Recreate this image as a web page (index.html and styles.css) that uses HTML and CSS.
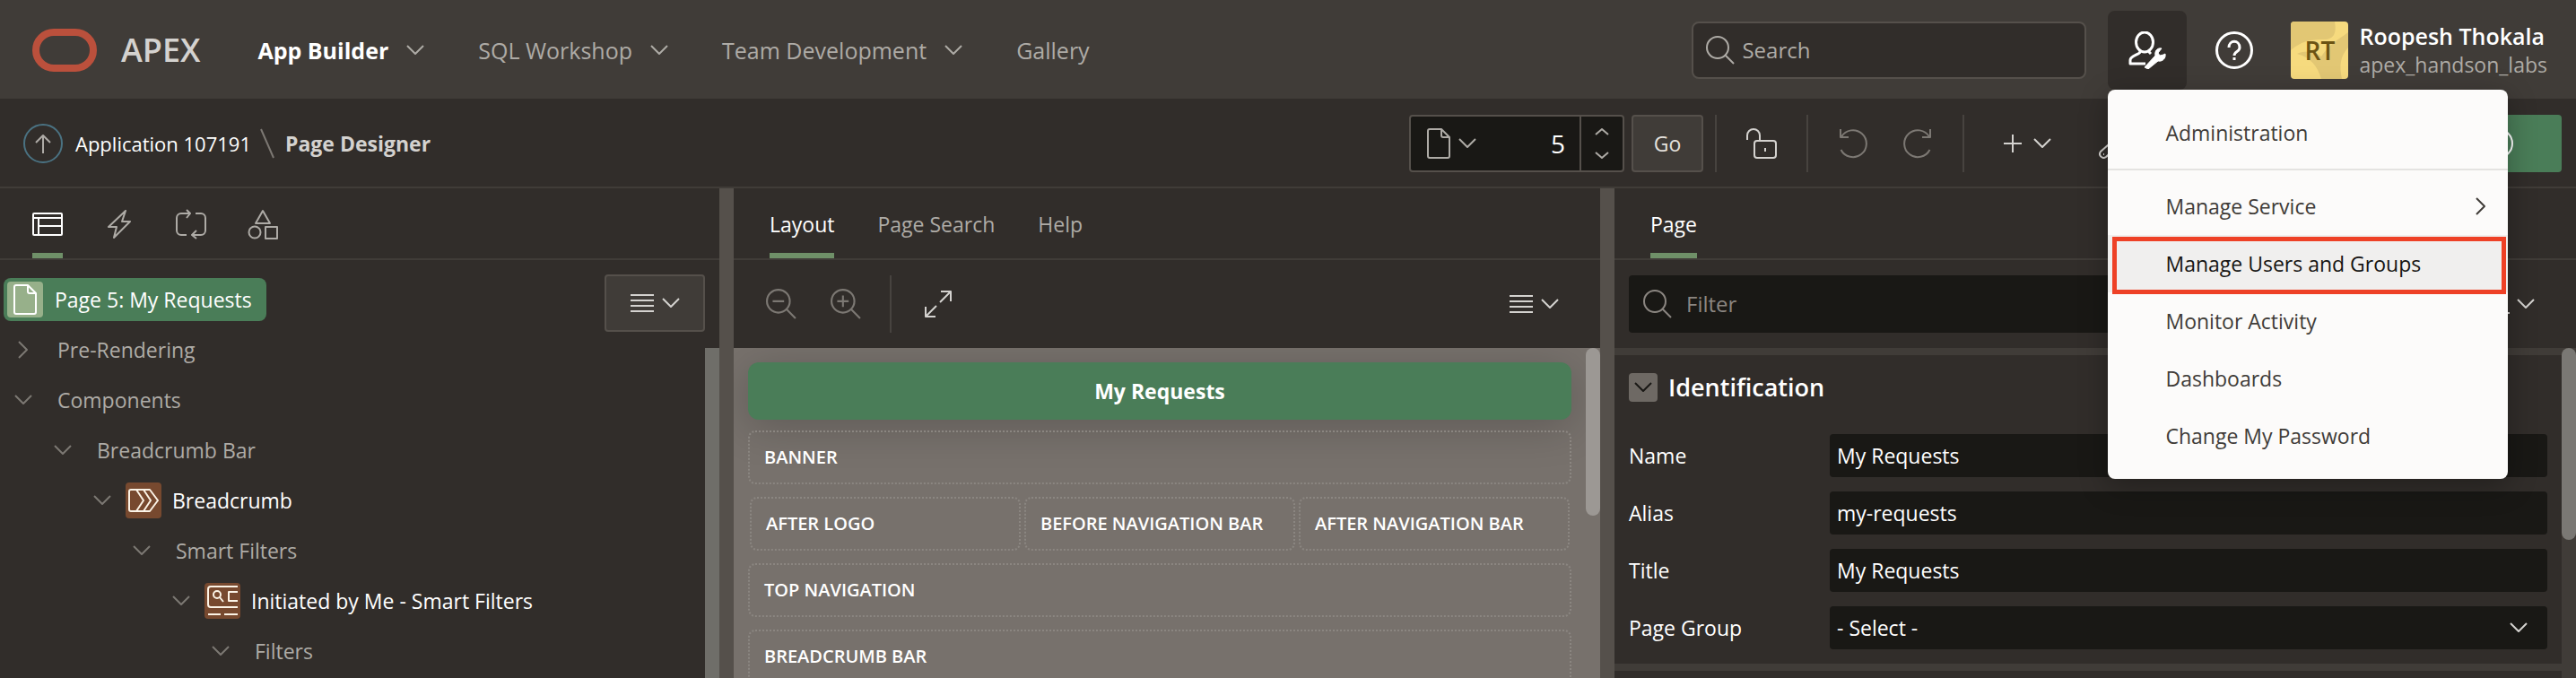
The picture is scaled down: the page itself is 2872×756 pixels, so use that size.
FILE: index.html
```html
<!DOCTYPE html>
<html lang="en">
<head>
<meta charset="utf-8">
<title>Page Designer</title>
<link rel="stylesheet" href="styles.css">
</head>
<body>
<svg class="sprite" aria-hidden="true">
  <symbol id="i-down" viewBox="0 0 20 12"><path d="M1 1l9 9 9-9"/></symbol>
  <symbol id="i-right" viewBox="0 0 12 20"><path d="M1 1l9 9-9 9"/></symbol>
  <symbol id="i-search" viewBox="0 0 32 32"><circle cx="13" cy="13" r="12"/><path d="M21.500 21.500L31 31"/></symbol>
  <symbol id="i-zoomout" viewBox="0 0 32 32"><circle cx="13" cy="13" r="12"/><path d="M21.500 21.500L31 31M7 13h12"/></symbol>
  <symbol id="i-zoomin" viewBox="0 0 32 32"><circle cx="13" cy="13" r="12"/><path d="M21.500 21.500L31 31M7 13h12M13 7v12"/></symbol>
  <symbol id="i-file" viewBox="0 0 26 34"><path d="M3 1h13l9 9v21a2 2 0 0 1-2 2H3a2 2 0 0 1-2-2V3a2 2 0 0 1 2-2zM16 1v7a2 2 0 0 0 2 2h7"/></symbol>
  <symbol id="i-lines" viewBox="0 0 26 22"><path d="M0 2h26M0 8h26M0 14h26M0 20h26"/></symbol>
  <symbol id="i-expand" viewBox="0 0 30 30"><path d="M18 1h11v11M29 1L17 13M12 29H1V18M1 29l12-12"/></symbol>
  <symbol id="i-undo" viewBox="0 0 32 34"><path d="M1 1v9h9M2 9.500A15 15 0 1 1 1.500 24"/></symbol>
  <symbol id="i-redo" viewBox="0 0 32 34"><path d="M31 1v9h-9M30 9.500A15 15 0 1 0 30.500 24"/></symbol>
</svg>
<div class="app">
  <header class="header">
    <svg class="logo" viewBox="0 0 72 48" aria-label="Oracle"><rect x="4" y="4" width="64" height="40" rx="20"/></svg>
    <span class="brand">APEX</span>
    <nav class="nav">
      <a class="nav-item active" href="#">App Builder <svg class="ic chev"><use href="#i-down"/></svg></a>
      <a class="nav-item" href="#">SQL Workshop <svg class="ic chev"><use href="#i-down"/></svg></a>
      <a class="nav-item" href="#">Team Development <svg class="ic chev"><use href="#i-down"/></svg></a>
      <a class="nav-item" href="#">Gallery</a>
    </nav>
    <label class="search"><svg class="ic i32"><use href="#i-search"/></svg><input type="search" placeholder="Search" aria-label="Search"></label>
    <div class="admin">
      <button class="admin-btn" aria-label="Administration menu">
        <svg class="ic i42" viewBox="0 0 42 42"><ellipse cx="18" cy="12" rx="9.500" ry="11"/><path d="M13 21v2c-1 3-11 4-11 9v4h17M23 21v2l2 2"/><path class="solid" d="M18 40l12-13c-1-5 2-9 7-8l-4 5 2 3 4-1 2-1c1 5-3 9-8 8L22 42z"/></svg>
      </button>
      <div class="menu" role="menu">
        <button role="menuitem">Administration</button>
        <hr>
        <button role="menuitem">Manage Service <svg class="ic chev-r"><use href="#i-right"/></svg></button>
        <button role="menuitem" class="current">Manage Users and Groups</button>
        <button role="menuitem">Monitor Activity</button>
        <button role="menuitem">Dashboards</button>
        <button role="menuitem">Change My Password</button>
      </div>
    </div>
    <button class="help" aria-label="Help"><svg class="ic i42" viewBox="0 0 42 42"><circle cx="21" cy="21" r="19.500"/><path d="M15 18c0-9 12-9 12 0 0 5-6 4-6 9M21 29v3"/></svg></button>
    <div class="user">
      <span class="avatar"><svg viewBox="0 0 64 64" aria-hidden="true"><path d="M0 0h49c2 12 0 20-12 20-16 0-25 2-37 12zM7 36c10-4 19-3 27 3 9-14 18-18 30-27v17c-9 10-10 20-7 35H34C30 50 22 40 7 36z"/></svg><span>RT</span></span>
      <div><div class="user-name">Roopesh Thokala</div><div class="user-ws">apex_handson_labs</div></div>
    </div>
  </header>

  <div class="toolbar">
    <a class="up" href="#" aria-label="Up"><svg class="ic i44" viewBox="0 0 44 44"><circle class="ring" cx="22" cy="22" r="21"/><path d="M22 33V13M14 21l8-8 8 8"/></svg></a>
    <a class="crumb" href="#">Application 107191</a>
    <svg class="ic slash" viewBox="0 0 16 34"><path d="M1 1l14 32"/></svg>
    <span class="crumb-here">Page Designer</span>
    <div class="tools">
      <div class="picker">
        <button class="picker-file" aria-label="Pages"><svg class="ic file"><use href="#i-file"/></svg><svg class="ic chev"><use href="#i-down"/></svg></button>
        <input class="picker-num" value="5" aria-label="Page number">
        <div class="steps">
          <button aria-label="Next page"><svg class="ic step" viewBox="0 0 16 8"><path d="M1 7l7-6 7 6"/></svg></button>
          <button aria-label="Previous page"><svg class="ic step" viewBox="0 0 16 8"><path d="M1 1l7 6 7-6"/></svg></button>
        </div>
      </div>
      <button class="go">Go</button>
      <span class="sep"></span>
      <button class="tool lock" aria-label="Lock page"><svg class="ic i34" viewBox="0 0 34 34"><rect x="9" y="14" width="24" height="19" rx="3"/><path d="M1 13V8a7 7 0 0 1 14 0v6M21 22v4"/></svg></button>
      <span class="sep"></span>
      <div class="pair">
        <button class="tool dim" aria-label="Undo"><svg class="ic i34"><use href="#i-undo"/></svg></button>
        <button class="tool dim" aria-label="Redo"><svg class="ic i34"><use href="#i-redo"/></svg></button>
      </div>
      <span class="sep"></span>
      <div class="actions">
        <button class="tool wide" aria-label="Create"><svg class="ic plus" viewBox="0 0 20 20"><path d="M10 0v20M0 10h20"/></svg><svg class="ic chev"><use href="#i-down"/></svg></button>
        <button class="tool wide utils" aria-label="Utilities"><svg class="ic i34" viewBox="0 0 34 34"><path d="M2 26L19 11c-2-7 4-12 10-10l-5 6 3 4 6-3c2 6-4 12-10 10L8 32c-4 3-9-2-6-6z"/><path d="M5 29h1"/></svg><svg class="ic chev"><use href="#i-down"/></svg></button>
        <button class="tool wide" aria-label="Comments"></button>
        <button class="tool save" aria-label="Save"></button>
        <button class="tool run" aria-label="Save and run page"><svg class="ic i34" viewBox="0 0 34 34"><circle cx="17" cy="17" r="16"/><path d="M11 10v14l10-7z"/></svg></button>
      </div>
    </div>
  </div>

  <main class="panels">
    <section class="panel">
      <div class="tabs icon-tabs">
        <button class="tab on" aria-label="Rendering"><svg class="ic i34" viewBox="0 0 34 34"><rect x="1" y="5" width="32" height="24" rx="1"/><path d="M1 10h32M7 10v19M7 19h26"/></svg></button>
        <button class="tab" aria-label="Dynamic Actions"><svg class="ic i34" viewBox="0 0 34 34"><path d="M24 2L5 20h9L11 32 29 14H20z"/></svg></button>
        <button class="tab" aria-label="Processing"><svg class="ic i34" viewBox="0 0 34 34"><path d="M22 5h6a5 5 0 0 1 5 5v14a5 5 0 0 1-5 5H18M12 29H6a5 5 0 0 1-5-5V10a5 5 0 0 1 5-5h10M12 1l4 4-4 5M23 24l-5 5 5 4"/></svg></button>
        <button class="tab" aria-label="Page Shared Components"><svg class="ic i34" viewBox="0 0 34 34"><path d="M17 2l8 14H9z"/><circle cx="8" cy="26" r="6.500"/><rect x="20" y="20" width="13" height="13"/></svg></button>
      </div>
      <div class="tree-wrap">
        <ul class="tree">
          <li class="row root"><span class="pill"><span class="node-ic page"><svg class="ic file"><use href="#i-file"/></svg></span>Page 5: My Requests</span></li>
          <li class="row l1"><span class="tw"><svg class="ic chev-r"><use href="#i-right"/></svg></span><span class="grp">Pre-Rendering</span></li>
          <li class="row l1"><span class="tw"><svg class="ic chev"><use href="#i-down"/></svg></span><span class="grp">Components</span></li>
          <li class="row l2"><span class="tw"><svg class="ic chev"><use href="#i-down"/></svg></span><span class="grp">Breadcrumb Bar</span></li>
          <li class="row l3"><span class="tw"><svg class="ic chev"><use href="#i-down"/></svg></span><span class="node-ic"><svg class="ic i34" viewBox="0 0 34 34"><path d="M3 5h21l9 12-9 12H3a2 2 0 0 1-2-2V7a2 2 0 0 1 2-2zM9 5l8 12-8 12M17 5l8 12-8 12"/></svg></span><span class="node">Breadcrumb</span></li>
          <li class="row l4"><span class="tw"><svg class="ic chev"><use href="#i-down"/></svg></span><span class="grp">Smart Filters</span></li>
          <li class="row l5"><span class="tw"><svg class="ic chev"><use href="#i-down"/></svg></span><span class="node-ic"><svg class="ic i34" viewBox="0 0 34 34"><path d="M34 1H4a3 3 0 0 0-3 3v17a3 3 0 0 0 3 3h30M1 32h14M19 32h15M34 7H24v10h10M14 13l4 5"/><circle cx="11" cy="10" r="4"/></svg></span><span class="node">Initiated by Me - Smart Filters</span></li>
          <li class="row l6"><span class="tw"><svg class="ic chev"><use href="#i-down"/></svg></span><span class="grp">Filters</span></li>
        </ul>
        <div class="tree-side">
          <button class="tree-menu" aria-label="Tree menu"><svg class="ic lines"><use href="#i-lines"/></svg><svg class="ic chev"><use href="#i-down"/></svg></button>
          <div class="tree-scroll"></div>
        </div>
      </div>
    </section>
    <div class="splitter"></div>
    <section class="panel">
      <div class="tabs"><button class="tab on">Layout</button><button class="tab">Page Search</button><button class="tab">Help</button></div>
      <div class="subbar">
        <button class="mag" aria-label="Zoom out"><svg class="ic i34"><use href="#i-zoomout"/></svg></button>
        <button class="mag" aria-label="Zoom in"><svg class="ic i34"><use href="#i-zoomin"/></svg></button>
        <span class="sep"></span>
        <button class="expand" aria-label="Expand"><svg class="ic i30"><use href="#i-expand"/></svg></button>
        <button class="list" aria-label="Layout menu"><svg class="ic lines"><use href="#i-lines"/></svg><svg class="ic chev"><use href="#i-down"/></svg></button>
      </div>
      <div class="layout">
        <div class="canvas">
          <div class="page-title">My Requests</div>
          <div class="region">BANNER</div>
          <div class="region-row"><div class="region">AFTER LOGO</div><div class="region">BEFORE NAVIGATION BAR</div><div class="region">AFTER NAVIGATION BAR</div></div>
          <div class="region">TOP NAVIGATION</div>
          <div class="region">BREADCRUMB BAR</div>
        </div>
        <div class="track"><div class="thumb light"></div></div>
      </div>
    </section>
    <div class="splitter"></div>
    <section class="panel">
      <div class="tabs"><button class="tab on">Page</button></div>
      <div class="filterbar">
        <label class="filter"><svg class="ic i32"><use href="#i-search"/></svg><input type="search" placeholder="Filter" aria-label="Filter properties"></label>
        <button class="goto" aria-label="Go to group"><svg class="ic i30" viewBox="0 0 30 30"><path d="M1 5h24M1 15h22M1 25h29"/></svg><svg class="ic chev"><use href="#i-down"/></svg></button>
      </div>
      <div class="props-wrap">
        <form class="props">
          <div class="group-head"><button type="button" class="collapse" aria-label="Collapse"><svg class="ic chev"><use href="#i-down"/></svg></button><h2>Identification</h2></div>
          <div class="prop"><label for="p1">Name</label><input id="p1" value="My Requests"></div>
          <div class="prop"><label for="p2">Alias</label><input id="p2" value="my-requests"></div>
          <div class="prop"><label for="p3">Title</label><input id="p3" value="My Requests"></div>
          <div class="prop"><label for="p4">Page Group</label><div class="select"><select id="p4"><option>- Select -</option></select><svg class="ic chev"><use href="#i-down"/></svg></div></div>
          <div class="band"></div>
        </form>
        <div class="track dark"><div class="thumb"></div></div>
      </div>
    </section>
  </main>
</div>
</body>
</html>
```
FILE: styles.css
```css
* { box-sizing: border-box; }
body {
  margin: 0;
  background: #312d2a;
  color: #fff;
  font: 23px/32px "Open Sans", "Noto Sans", sans-serif;
}
button, input, select { font: inherit; color: inherit; background: none; border: 0; padding: 0; margin: 0; }
a { color: inherit; text-decoration: none; }
ul, h2 { margin: 0; padding: 0; list-style: none; }
input::placeholder { color: inherit; opacity: 1; }

.sprite { display: none; }
.ic { display: block; flex: none; fill: none; stroke: currentColor; stroke-width: 2; stroke-linejoin: round; }
.chev { width: 20px; height: 12px; }
.chev-r { width: 12px; height: 20px; }
.i30 { width: 30px; height: 30px; }
.i32 { width: 32px; height: 32px; }
.i34 { width: 34px; height: 34px; }
.i42 { width: 42px; height: 42px; stroke-width: 3; }
.i44 { width: 44px; height: 44px; }
.file { width: 26px; height: 34px; }
.lines { width: 26px; height: 22px; }
.plus { width: 20px; height: 20px; }
.step { width: 16px; height: 8px; }
.slash { width: 16px; height: 34px; color: #7c7873; }
.solid { fill: currentColor; stroke-width: 1; }
.ring { stroke: #4a7282; }
.sep { flex: none; width: 2px; height: 64px; background: #47433f; }

.app { display: flex; flex-direction: column; height: 100vh; overflow: hidden; }

/* Header */
.header { display: flex; align-items: center; flex: none; height: 110px; padding: 2px 32px 0 36px; background: #403c38; }
.logo { width: 72px; height: 48px; fill: none; stroke: #bb503c; stroke-width: 8; }
.brand { margin-left: 27px; font-size: 36px; font-weight: 600; color: #d4d2cf; }
.nav { display: flex; gap: 60px; margin-left: 64px; }
.nav-item { display: flex; align-items: center; gap: 20px; color: #aeaba6; font-size: 25px; }
.nav-item.active { color: #fff; font-weight: 700; }
.nav-item .chev { color: #aeaba6; }
.search { display: flex; align-items: center; gap: 8px; width: 440px; height: 64px; margin-left: auto; padding: 0 14px; border: 2px solid #55504b; border-radius: 8px; background: #312d2a; color: #aeaba6; }
.search input, .filter input { flex: 1; min-width: 0; font-size: 24px; }
.admin { position: relative; margin-left: 24px; }
.admin-btn { display: flex; align-items: center; justify-content: center; width: 88px; height: 88px; border-radius: 8px; background: #312d2a; }
.help { margin-left: 32px; }
.user { display: flex; align-items: center; gap: 12px; margin-left: 42px; }
.avatar { display: grid; place-items: center; width: 64px; height: 64px; overflow: hidden; border-radius: 4px; background: #f6da7e; color: #6b5313; font-weight: 600; font-size: 28px; }
.avatar > * { grid-area: 1 / 1; }
.avatar svg { width: 64px; height: 64px; fill: #e2c774; }
.user-name { font-weight: 600; font-size: 25px; }
.user-ws { color: #aeaba6; }

.menu { position: absolute; z-index: 5; top: 100%; left: 0; width: 446px; padding: 16px 0; border-radius: 8px; background: #fcfbfa; color: #403c38; box-shadow: 0 8px 32px rgba(0, 0, 0, 0.3); }
.menu button { display: flex; align-items: center; justify-content: space-between; width: 100%; height: 64px; padding: 0 24px 0 64px; }
.menu hr { height: 2px; margin: 8px 0; border: 0; background: #e4e3e1; }
.menu .current { position: relative; background: #f0efee; color: #161513; }
.menu .current::after { content: ""; position: absolute; inset: 2px 2px -2px 5px; border: 5px solid #ee4126; }

/* Toolbar */
.toolbar { display: flex; align-items: center; flex: none; height: 100px; padding: 2px 16px 0 26px; border-bottom: 2px solid #403c38; }
.up { color: #aeaba6; }
.crumb { margin: 0 10px 0 14px; font-size: 22px; }
.crumb-here { margin-left: 12px; color: #d4d2cf; font-weight: 700; }
.tools { display: flex; align-items: center; margin-left: auto; }
.picker { display: flex; width: 240px; height: 64px; border: 2px solid #55504b; border-radius: 4px; background: #191815; }
.picker-file { display: flex; align-items: center; gap: 9px; padding: 0 18px; color: #aeaba6; }
.picker-num { flex: 1; min-width: 0; padding-right: 16px; text-align: right; font-size: 28px; }
.steps { display: flex; flex-direction: column; justify-content: space-around; align-items: center; width: 48px; padding: 4px 0; border-left: 2px solid #55504b; color: #aeaba6; }
.steps button { display: flex; }
.go { width: 80px; height: 64px; margin: 0 13px 0 8px; border: 2px solid #55504b; border-radius: 4px; background: #403c38; color: #e4e1dd; }
.tool { display: flex; align-items: center; justify-content: center; gap: 13px; height: 64px; width: 70px; color: #d4d2cf; }
.lock { width: 100px; }
.dim { color: #7c7873; }
.pair { display: flex; padding: 0 16px; }
.actions { display: flex; gap: 8px; margin-left: 14px; }
.wide { width: 112px; }
.utils { justify-content: flex-start; padding-left: 16px; }
.save, .run { width: 142px; border-radius: 4px; }
.run { background: #4a7d58; color: #fff; }

/* Panels */
.panels { display: grid; grid-template-columns: 802fr 16px 966fr 16px 1072fr; flex: 1; min-height: 0; }
.panel { display: flex; flex-direction: column; min-width: 0; min-height: 0; overflow: hidden; }
.splitter { background: #55504b; }
.tabs { display: flex; gap: 48px; flex: none; height: 80px; padding: 0 40px; border-bottom: 2px solid #403c38; }
.icon-tabs { gap: 46px; padding: 0 36px; }
.tab { display: flex; align-items: center; padding-top: 8px; border-bottom: 6px solid transparent; color: #aeaba6; }
.tab.on { color: #fff; border-bottom-color: #6f9068; }

.tree-wrap { display: flex; flex: 1; min-height: 0; }
.tree { flex: 1; padding: 16px 4px; }
.row { display: flex; align-items: center; height: 56px; color: #aeaba6; white-space: nowrap; }
.pill { display: flex; align-items: center; gap: 13px; height: 48px; padding: 0 16px 0 4px; border-radius: 8px; background: #4a7d58; color: #fff; }
.node-ic { display: flex; align-items: center; justify-content: center; width: 40px; height: 40px; margin-right: 12px; border-radius: 4px; background: #77492f; color: #fbf3e6; }
.node-ic.page { margin: 0; background: #97b08a; color: #fff; }
.tw { display: flex; align-items: center; justify-content: center; width: 20px; margin-right: 16px; color: #7c7873; }
.grp { margin-left: 12px; }
.node { color: #fff; }
.l1 { padding-left: 12px; }
.l2 { padding-left: 56px; }
.l3 { padding-left: 100px; }
.l4 { padding-left: 144px; }
.l5 { padding-left: 188px; }
.l6 { padding-left: 232px; }
.tree-side { display: flex; flex-direction: column; align-items: flex-end; padding-top: 16px; }
.tree-menu { display: flex; align-items: center; justify-content: center; gap: 9px; width: 112px; height: 64px; margin: 0 16px 18px 0; border: 2px solid #55504b; border-radius: 4px; background: #403c38; color: #d4d2cf; }
.tree-scroll { flex: 1; width: 16px; background: #6f6e69; }

.subbar { display: flex; align-items: center; flex: none; height: 98px; padding: 0 46px 0 36px; color: #d4d2cf; }
.mag { width: 72px; color: #7c7873; }
.subbar .sep { margin: 0 37px 0 -6px; }
.list { display: flex; align-items: center; gap: 9px; margin-left: auto; }
.layout { display: flex; flex: 1; min-height: 0; background: #77716c; }
.canvas { flex: 1; padding: 16px; overflow: hidden; font-size: 20px; font-weight: 600; }
.page-title { display: flex; align-items: center; justify-content: center; height: 64px; margin-bottom: 12px; border-radius: 12px; background: #4a7d58; box-shadow: 0 8px 48px rgba(0, 0, 0, 0.2); font-size: 23px; font-weight: 700; }
.region { display: flex; align-items: center; flex: 1; height: 60px; margin-bottom: 14px; padding: 0 16px; border: 2px dotted #8b8681; border-radius: 8px; }
.region-row { display: flex; gap: 4px; padding: 0 2px; }
.track { flex: none; width: 16px; }
.track.dark { background: #403c38; }
.thumb { height: 214px; border-radius: 8px; background: #7a7874; }
.thumb.light { height: 187px; background: #9c9894; }

.filterbar { display: flex; align-items: center; gap: 16px; flex: none; height: 98px; padding: 0 46px 0 16px; }
.filter { display: flex; align-items: center; gap: 16px; flex: 1; height: 64px; padding: 0 16px; border-radius: 4px; background: #191815; color: #8b8681; }
.goto { display: flex; align-items: center; gap: 8px; color: #d4d2cf; }
.props-wrap { display: flex; flex: 1; min-height: 0; }
.props { flex: 1; border-top: 8px solid #403c38; }
.group-head { display: flex; align-items: center; gap: 12px; height: 72px; margin-bottom: 8px; padding: 0 16px; }
.group-head h2 { font-size: 27px; font-weight: 600; }
.collapse { display: flex; align-items: center; justify-content: center; width: 32px; height: 32px; border-radius: 4px; background: #6e6964; color: #191815; }
.prop { display: grid; grid-template-columns: 224px 1fr; align-items: center; height: 64px; padding: 0 16px; }
.prop input, .prop select { width: 100%; height: 48px; padding: 0 8px; border-radius: 4px; background: #191815; appearance: none; }
.select { display: grid; align-items: center; }
.select > * { grid-area: 1 / 1; }
.select .chev { justify-self: end; margin-right: 22px; color: #d4d2cf; }
.band { height: 8px; margin-top: 8px; background: #403c38; }
```
